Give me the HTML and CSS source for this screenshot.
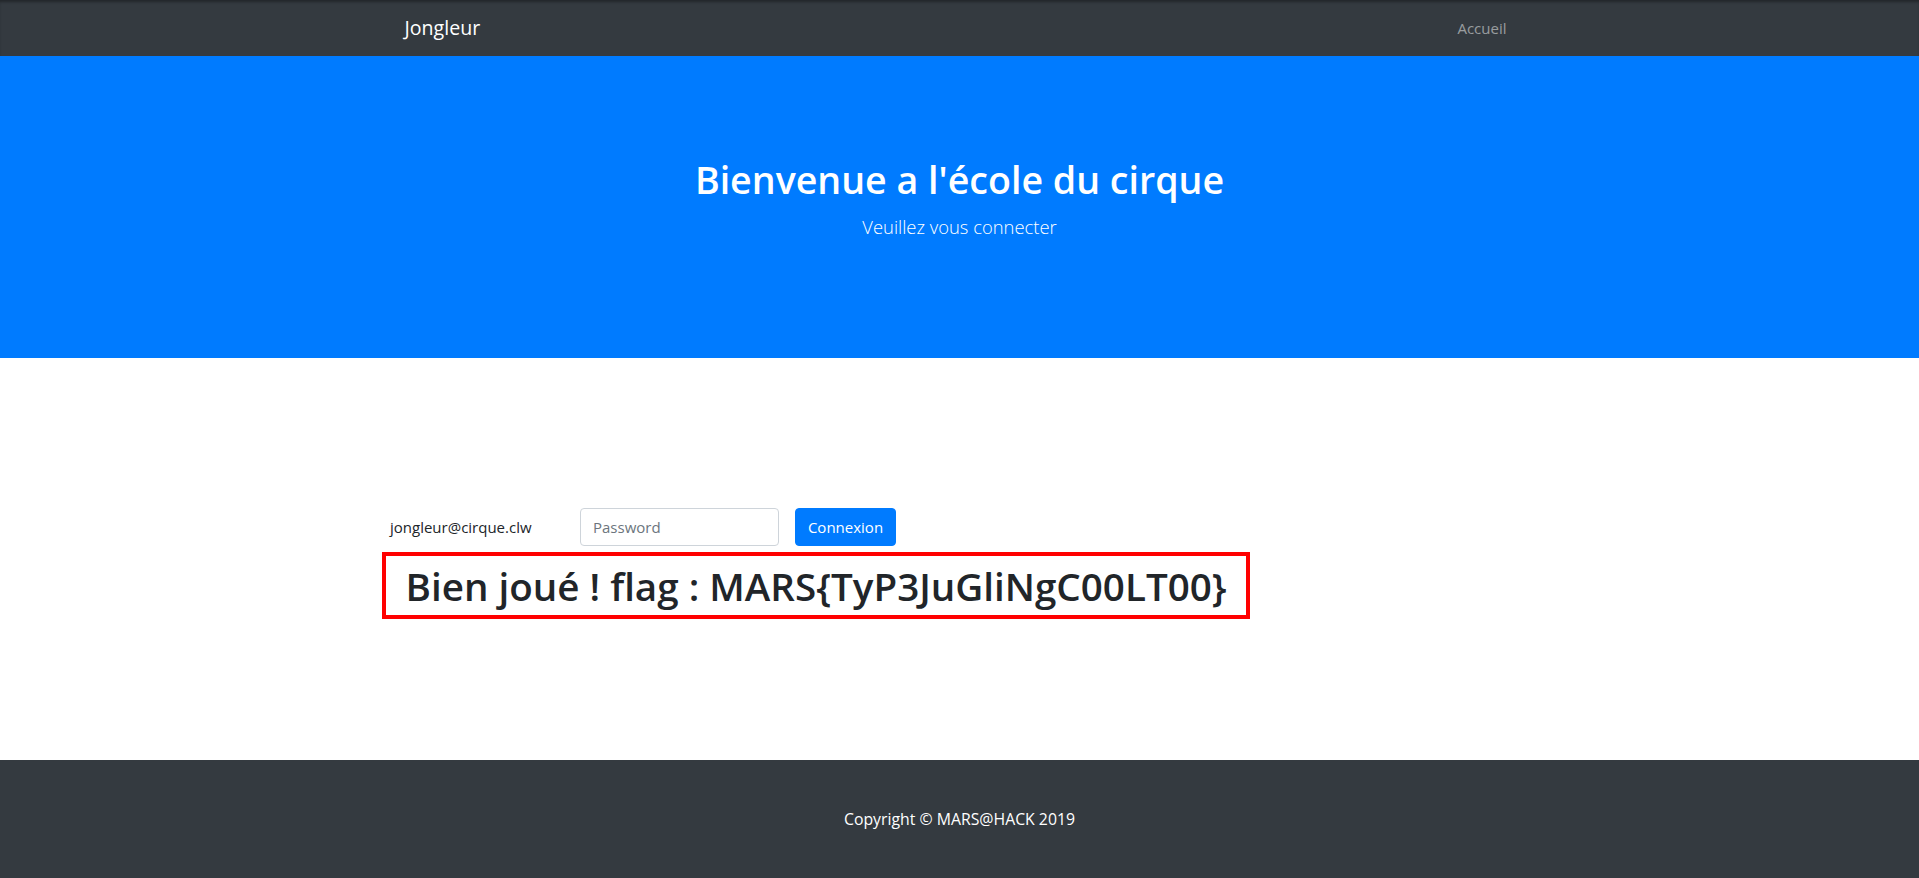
FILE: index.html
```html
<!DOCTYPE html>
<html lang="fr">
<head>
<meta charset="utf-8">
<title>Jongleur</title>
<link rel="stylesheet" href="styles.css">
</head>
<body>
<nav class="navbar">
  <div class="container nav-inner">
    <a class="brand" href="#">Jongleur</a>
    <a class="nav-link" href="#">Accueil</a>
  </div>
</nav>
<header class="hero">
  <h1 class="hero-title">Bienvenue a l'école du cirque</h1>
  <p class="hero-lead">Veuillez vous connecter</p>
</header>
<main class="main">
  <div class="main-inner">
    <form class="login-form">
      <span class="email">jongleur@cirque.clw</span>
      <input class="password" type="password" placeholder="Password">
      <button class="btn" type="button">Connexion</button>
    </form>
    <div class="flag-box"><h1 class="flag">Bien joué ! flag : MARS{TyP3JuGliNgC00LT00}</h1></div>
  </div>
</main>
<footer class="footer">
  <p class="copyright">Copyright © MARS@HACK 2019</p>
</footer>
</body>
</html>
```
FILE: styles.css
```css
* { box-sizing: border-box; }
html, body { margin: 0; padding: 0; }
body {
  font-family: "Open Sans", "Noto Sans", "Liberation Sans", sans-serif;
  font-size: 16px;
  line-height: 1.5;
  color: #212529;
  background: #fff;
}
a { text-decoration: none; }
.container {
  max-width: 1140px;
  margin: 0 auto;
  padding: 0 15px;
}
.navbar {
  background: #343a40;
  height: 56px;
  box-shadow: inset 0 3px 3px -1px rgba(0, 0, 0, 0.35);
}
.nav-inner {
  height: 100%;
  display: flex;
  align-items: center;
  justify-content: space-between;
}
.brand {
  color: #fff;
  font-size: 19.6px;
  line-height: 30px;
}
.nav-link {
  color: rgba(255, 255, 255, 0.5);
  font-size: 15px;
  padding: 8px;
}
.hero {
  background: #007bff;
  height: 302px;
  padding-top: 100px;
  text-align: center;
  color: #fff;
}
.hero-title {
  margin: 0 0 8px;
  font-size: 37.6px;
  line-height: 48px;
  font-weight: 600;
}
.hero-lead {
  margin: 0;
  font-size: 18.4px;
  line-height: 30px;
  font-weight: 300;
}
.main {
  padding: 150px 0 141px;
}
.main-inner {
  max-width: 1155px;
  margin: 0 auto;
}
.login-form {
  display: flex;
  align-items: center;
  margin: 0 0 6px;
}
.email {
  width: 182px;
  padding-left: 8px;
  font-size: 15px;
}
.password {
  width: 199px;
  height: 38px;
  margin: 0 16px;
  padding: 6px 12px;
  font-family: inherit;
  font-size: 15px;
  color: #495057;
  border: 1px solid #ced4da;
  border-radius: 4px;
}
.password::placeholder { color: #6c757d; }
.btn {
  width: 101px;
  height: 38px;
  background: #007bff;
  border: 1px solid #007bff;
  border-radius: 4px;
  color: #fff;
  font-family: inherit;
  font-size: 15px;
}
.flag-box {
  display: inline-block;
  border: 4px solid #ff0000;
  padding: 6px 19px 5px 19.5px;
}
.flag {
  margin: 0;
  font-size: 38.6px;
  line-height: 48px;
  font-weight: 600;
  color: #212529;
}
.footer {
  background: #343a40;
  padding: 47px 0;
  text-align: center;
}
.copyright {
  margin: 0;
  color: #fff;
  font-size: 15.8px;
  line-height: 24px;
}
```
